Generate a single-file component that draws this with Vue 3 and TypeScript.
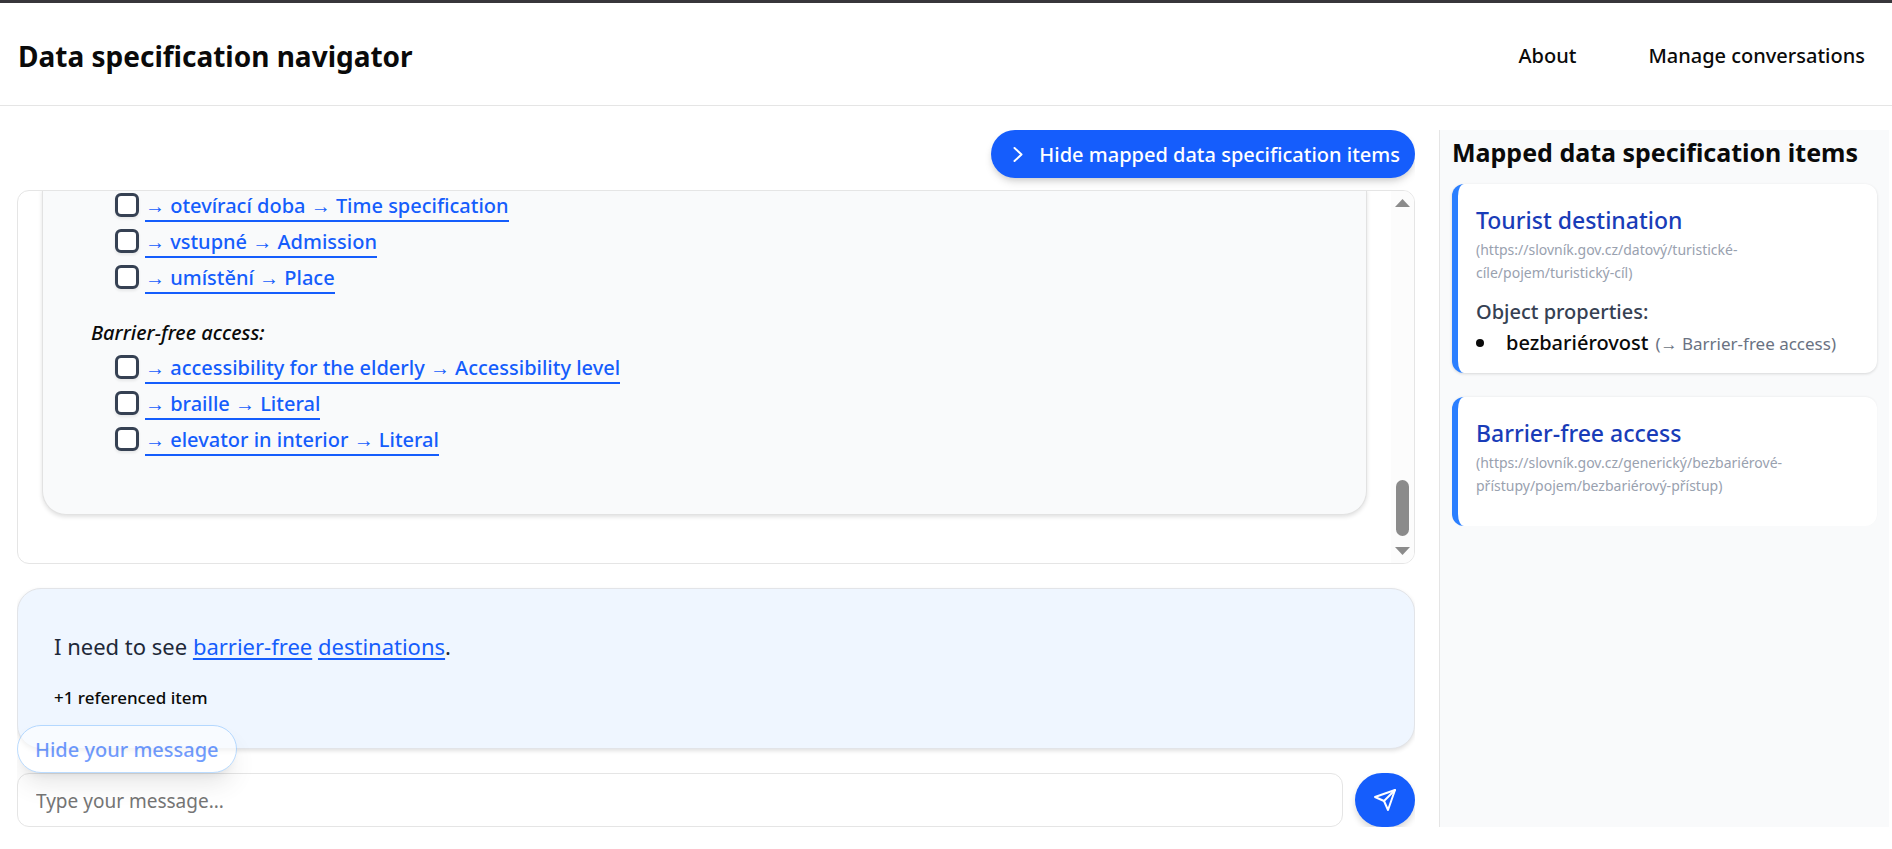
<script setup lang="ts">
import { ref } from 'vue'

interface Property {
  id: string
  label: string
}

interface MappedItem {
  name: string
  iri: string
  properties: { name: string; target: string }[]
}

const destinationProperties = ref<Property[]>([
  { id: 'opening', label: '→ otevírací doba → Time specification' },
  { id: 'admission', label: '→ vstupné → Admission' },
  { id: 'place', label: '→ umístění → Place' },
])

const accessProperties = ref<Property[]>([
  { id: 'elderly', label: '→ accessibility for the elderly → Accessibility level' },
  { id: 'braille', label: '→ braille → Literal' },
  { id: 'elevator', label: '→ elevator in interior → Literal' },
])

const mappedItems: MappedItem[] = [
  {
    name: 'Tourist destination',
    iri: '(https://slovník.gov.cz/datový/turistické-cíle/pojem/turistický-cíl)',
    properties: [{ name: 'bezbariérovost', target: '(→ Barrier-free access)' }],
  },
  {
    name: 'Barrier-free access',
    iri: '(https://slovník.gov.cz/generický/bezbariérové-přístupy/pojem/bezbariérový-přístup)',
    properties: [],
  },
]

const selected = ref<string[]>([])
const draft = ref('')
</script>

<template>
  <div class="page">
    <header class="header">
      <h1 class="title">Data specification navigator</h1>
      <nav class="nav">
        <a href="#about">About</a>
        <a href="#conversations">Manage conversations</a>
      </nav>
    </header>

    <div class="body">
      <main class="chat">
        <button type="button" class="toggle">
          <svg class="chevron" viewBox="0 0 24 24" fill="none" stroke="currentColor" stroke-width="2" stroke-linecap="round" stroke-linejoin="round" aria-hidden="true">
            <path d="M8.500 5l7 6.500-7 6.500" />
          </svg>
          Hide mapped data specification items
        </button>

        <section class="history">
          <div class="viewport">
            <article class="reply">
              <ul class="options">
                <li v-for="p in destinationProperties" :key="p.id">
                  <input :id="p.id" v-model="selected" type="checkbox" :value="p.id" :aria-label="p.label" />
                  <a href="#" @click.prevent>{{ p.label }}</a>
                </li>
              </ul>
              <p class="group">Barrier-free access:</p>
              <ul class="options">
                <li v-for="p in accessProperties" :key="p.id">
                  <input :id="p.id" v-model="selected" type="checkbox" :value="p.id" :aria-label="p.label" />
                  <a href="#" @click.prevent>{{ p.label }}</a>
                </li>
              </ul>
            </article>
          </div>
          <div class="scrollbar" aria-hidden="true">
            <svg width="15" height="8" viewBox="0 0 15 8"><path d="M0 8L7.500 0L15 8Z" fill="#8b8b8b" /></svg>
            <span class="thumb"></span>
            <svg width="15" height="8" viewBox="0 0 15 8"><path d="M0 0L7.500 8L15 0Z" fill="#8b8b8b" /></svg>
          </div>
        </section>

        <section class="message">
          <p class="message-text">I need to see <a href="#" @click.prevent>barrier-free</a> <a href="#" @click.prevent>destinations</a>.</p>
          <p class="referenced">+1 referenced item</p>
          <button type="button" class="hide-message">Hide your message</button>
        </section>

        <form class="composer" @submit.prevent>
          <input v-model="draft" type="text" placeholder="Type your message..." aria-label="Your message" />
          <button type="submit" aria-label="Send message">
            <svg viewBox="0 0 24 24" fill="none" stroke="currentColor" stroke-width="2" stroke-linejoin="round" stroke-linecap="round" aria-hidden="true">
              <path d="M22 2L15 22L11 13L2 9Z" />
              <path d="M22 2L11 13" />
            </svg>
          </button>
        </form>
      </main>

      <aside class="sidebar">
        <h2>Mapped data specification items</h2>
        <article v-for="item in mappedItems" :key="item.name" class="item">
          <h3>{{ item.name }}</h3>
          <p class="iri">{{ item.iri }}</p>
          <template v-if="item.properties.length">
            <h4>Object properties:</h4>
            <ul>
              <li v-for="prop in item.properties" :key="prop.name">
                <strong>{{ prop.name }}</strong> <span>{{ prop.target }}</span>
              </li>
            </ul>
          </template>
        </article>
      </aside>
    </div>
  </div>
</template>

<style>
body {
  margin: 0;
  background: #ffffff;
}
</style>

<style scoped>
.page,
.page * {
  box-sizing: border-box;
}

.page {
  display: flex;
  flex-direction: column;
  height: 100vh;
  min-height: 720px;
  border-top: 3px solid #38363b;
  color: #0a0a0a;
  font-family: "Segoe UI", "Noto Sans", "Open Sans", sans-serif;
  font-size: 20px;
  line-height: 36px;
}

h1,
h2,
h3,
h4,
p,
ul {
  margin: 0;
  padding: 0;
}

button,
input {
  font: inherit;
}

.header {
  display: flex;
  align-items: center;
  justify-content: space-between;
  height: 103px;
  flex: none;
  padding: 3px 27px 0 18px;
  border-bottom: 1px solid #e5e5e5;
}

.title {
  font-size: 28px;
  font-weight: 700;
}

.nav {
  display: flex;
  gap: 72px;
}

.nav a {
  color: #0a0a0a;
  font-weight: 500;
  text-decoration: none;
}

.body {
  display: flex;
  flex: 1;
  min-height: 0;
  gap: 24px;
  padding: 24px 3px 22px 17px;
}

.chat {
  display: flex;
  flex: 1;
  flex-direction: column;
  min-width: 0;
  overflow: hidden;
}

.toggle {
  display: flex;
  align-items: center;
  align-self: flex-end;
  flex: none;
  gap: 9px;
  height: 48px;
  padding: 2px 15px 0;
  border: 0;
  border-radius: 24px;
  background: #155dfc;
  box-shadow: 0 5px 9px -1px rgb(0 0 0 / 12%), 0 3px 6px -2px rgb(0 0 0 / 12%);
  color: #ffffff;
  font-weight: 500;
}

.chevron {
  width: 24px;
  height: 24px;
}

.history {
  display: flex;
  flex: 1;
  min-height: 0;
  margin-top: 12px;
  border: 1px solid #e5e5e5;
  border-radius: 12px;
  overflow: hidden;
}

.viewport {
  display: flex;
  flex: 1;
  flex-direction: column;
  justify-content: flex-end;
  min-width: 0;
  padding: 0 24px 48px;
  overflow: hidden;
}

.reply {
  padding: 0 48px 55px;
  border: 1px solid #e2e2e2;
  border-top: 0;
  border-radius: 0 0 24px 24px;
  background: #f9fafb;
  box-shadow: 0 2px 4px rgb(0 0 0 / 12%);
}

.options {
  padding-left: 24px;
  list-style: none;
}

.options li {
  display: flex;
  align-items: center;
  gap: 6px;
  height: 36px;
}

.options input {
  width: 24px;
  height: 24px;
  flex: none;
  margin: 0 0 4px;
  appearance: none;
  border: 3px solid #364153;
  border-radius: 6px;
  background: #ffffff;
  box-shadow: 0 2px 3px rgb(0 0 0 / 8%);
}

.options input:checked {
  background: #364153;
}

.options a {
  border-bottom: 2px solid #155dfc;
  color: #155dfc;
  font-weight: 500;
  line-height: 28px;
  text-decoration: none;
}

.group {
  margin-top: 18px;
  font-style: italic;
  font-weight: 500;
}

.scrollbar {
  display: flex;
  flex: none;
  flex-direction: column;
  align-items: center;
  width: 23px;
  padding: 8px 0;
  background: #fcfcfc;
}

.thumb {
  width: 13px;
  height: 56px;
  margin: auto 0 11px;
  border-radius: 7px;
  background: #8b8b8b;
}

.message {
  position: relative;
  flex: none;
  height: 161px;
  margin-top: 24px;
  padding: 36px;
  border: 1px solid #e2e4e8;
  border-radius: 24px;
  background: #eff6ff;
  box-shadow: 0 2px 4px rgb(0 0 0 / 12%);
}

.message-text {
  color: #1e2939;
  font-size: 22px;
  line-height: 42px;
}

.message-text a {
  color: #155dfc;
  text-decoration-thickness: 2px;
  text-underline-offset: 3px;
}

.referenced {
  margin-top: 12px;
  font-size: 17px;
  font-weight: 500;
  line-height: 38px;
}

.hide-message {
  position: absolute;
  bottom: -25px;
  left: -1px;
  z-index: 1;
  height: 48px;
  padding: 2px 17px 0;
  border: 1px solid #8ec5ff;
  border-radius: 24px;
  background: #ffffff;
  box-shadow: 0 15px 23px -5px rgb(0 0 0 / 16%), 0 6px 9px -6px rgb(0 0 0 / 16%);
  color: #155dfc;
  font-weight: 500;
  opacity: 0.6;
}

.composer {
  display: flex;
  flex: none;
  gap: 12px;
  margin-top: 24px;
}

.composer input {
  flex: 1;
  min-width: 0;
  height: 54px;
  padding: 2px 18px 0;
  border: 1px solid #e5e5e5;
  border-radius: 12px;
  background: transparent;
  color: #0a0a0a;
  font-size: 19px;
}

.composer input::placeholder {
  color: #757575;
}

.composer button {
  display: flex;
  align-items: center;
  justify-content: center;
  width: 60px;
  height: 54px;
  padding: 0;
  border: 0;
  border-radius: 27px;
  background: #155dfc;
  box-shadow: 0 4px 6px rgb(0 0 0 / 15%);
  color: #ffffff;
}

.composer svg {
  width: 24px;
  height: 24px;
}

.sidebar {
  flex: none;
  width: 24%;
  min-width: 450px;
  max-width: 450px;
  padding: 4px 12px 12px;
  border-left: 1px solid #e5e5e5;
  background: #f9fafb;
}

.sidebar h2 {
  margin-bottom: 14px;
  font-size: 25px;
  font-weight: 700;
  white-space: nowrap;
}

.item {
  margin-bottom: 24px;
  padding: 19px 18px 15px;
  border-left: 6px solid #2b7fff;
  border-radius: 12px;
  background: #ffffff;
  box-shadow: 0 1px 3px rgb(0 0 0 / 14%);
}

.item:last-child {
  padding-bottom: 29px;
  box-shadow: 0 -1px 2px rgb(0 0 0 / 4%);
}

.item h3 {
  color: #193cb8;
  font-size: 23px;
  font-weight: 500;
  line-height: 35px;
}

.iri {
  color: #99a1af;
  font-size: 14px;
  line-height: 23px;
}

.item h4 {
  margin-top: 12px;
  color: #364153;
  font-size: 20px;
  font-weight: 500;
  line-height: 32px;
}

.item ul {
  list-style: none;
}

.item li {
  display: flex;
  align-items: baseline;
  line-height: 29px;
  white-space: nowrap;
}

.item li::before {
  width: 8px;
  height: 8px;
  flex: none;
  align-self: center;
  margin-right: 22px;
  border-radius: 50%;
  background: #0a0a0a;
  content: "";
}

.item strong {
  margin-right: 7px;
  font-weight: 500;
}

.item span {
  color: #6a7282;
  font-size: 17px;
}
</style>
